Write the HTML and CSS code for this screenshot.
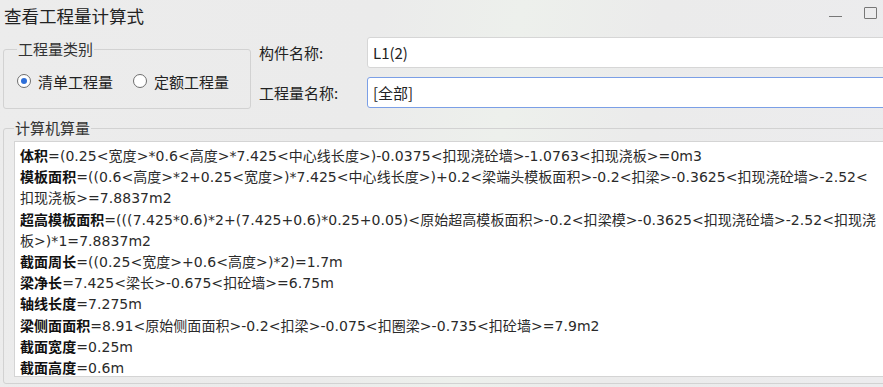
FILE: index.html
```html
<!DOCTYPE html>
<html lang="zh-CN">
<head>
    <meta charset="UTF-8">
    <title>查看工程量计算式</title>
    <link rel="stylesheet" href="styles.css">
</head>
<body>

<div class="window">
    <div class="titlebar">
        <span class="title">查看工程量计算式</span>
        <div class="controls">
            <span class="btn-min"></span>
            <span class="btn-max"></span>
        </div>
    </div>

    <div class="top">
        <fieldset class="group kind">
            <legend>工程量类别</legend>
            <label class="radio"><span class="dot checked"></span>清单工程量</label>
            <label class="radio"><span class="dot"></span>定额工程量</label>
        </fieldset>

        <div class="form">
            <div class="row">
                <span class="label">构件名称:</span>
                <div class="input">L1(2)</div>
            </div>
            <div class="row">
                <span class="label">工程量名称:</span>
                <div class="input focus">[全部]</div>
            </div>
        </div>
    </div>

    <fieldset class="group calc">
        <legend>计算机算量</legend>
        <div class="textbox">
            <p><b>体积</b>=(0.25&lt;宽度&gt;*0.6&lt;高度&gt;*7.425&lt;中心线长度&gt;)-0.0375&lt;扣现浇砼墙&gt;-1.0763&lt;扣现浇板&gt;=0m3</p>
            <p><b>模板面积</b>=((0.6&lt;高度&gt;*2+0.25&lt;宽度&gt;)*7.425&lt;中心线长度&gt;)+0.2&lt;梁端头模板面积&gt;-0.2&lt;扣梁&gt;-0.3625&lt;扣现浇砼墙&gt;-2.52&lt;<br>扣现浇板&gt;=7.8837m2</p>
            <p><b>超高模板面积</b>=(((7.425*0.6)*2+(7.425+0.6)*0.25+0.05)&lt;原始超高模板面积&gt;-0.2&lt;扣梁模&gt;-0.3625&lt;扣现浇砼墙&gt;-2.52&lt;扣现浇<br>板&gt;)*1=7.8837m2</p>
            <p><b>截面周长</b>=((0.25&lt;宽度&gt;+0.6&lt;高度&gt;)*2)=1.7m</p>
            <p><b>梁净长</b>=7.425&lt;梁长&gt;-0.675&lt;扣砼墙&gt;=6.75m</p>
            <p><b>轴线长度</b>=7.275m</p>
            <p><b>梁侧面面积</b>=8.91&lt;原始侧面面积&gt;-0.2&lt;扣梁&gt;-0.075&lt;扣圈梁&gt;-0.735&lt;扣砼墙&gt;=7.9m2</p>
            <p><b>截面宽度</b>=0.25m</p>
            <p><b>截面高度</b>=0.6m</p>
        </div>
    </fieldset>
</div>

</body>
</html>
```

FILE: styles.css
```css
html, body {
    margin: 0;
    padding: 0;
    height: 100%;
    overflow: hidden;
}
body {
    font-family: "Noto Sans CJK SC", "Noto Sans", sans-serif;
    font-size: 15px;
    color: #222;
    background-color: #ebebeb;
}
.window {
    width: 883px;
    height: 387px;
    overflow: hidden;
    background: linear-gradient(100deg, #ececec 0%, #ebebeb 40%, #edf0ec 55%, #ebebeb 70%, #ececee 100%);
}
.titlebar {
    height: 33px;
    display: flex;
    align-items: flex-start;
    justify-content: space-between;
}
.title {
    font-size: 17.5px;
    line-height: 32px;
    margin-left: 4px;
    color: #222;
}
.controls {
    display: flex;
    align-items: flex-start;
    gap: 22px;
    margin-right: 6px;
}
.btn-min {
    width: 13px;
    height: 1px;
    background-color: #777;
    margin-top: 16px;
}
.btn-max {
    width: 11px;
    height: 10px;
    margin-top: 7px;
    border: 1px solid #777;
    border-radius: 1px;
}
.top {
    display: flex;
    align-items: flex-start;
    height: 86px;
}
.group {
    margin: 0;
    padding: 0 10px;
    border: 1px solid #d2d2d2;
    border-radius: 3px;
    min-width: 0;
}
.group legend {
    padding: 0 1px;
    color: #333;
    line-height: 18px;
}
.kind {
    flex-shrink: 0;
    margin-left: 3px;
    margin-top: 7px;
    width: 248px;
    height: 69px;
    box-sizing: border-box;
    display: flex;
    align-items: center;
    padding-left: 13px;
}
.radio {
    display: flex;
    align-items: center;
    gap: 7px;
    padding-bottom: 4px;
    white-space: nowrap;
}
.radio + .radio {
    margin-left: 20px;
}
.dot {
    width: 12px;
    height: 12px;
    border: 1px solid #6e6e6e;
    border-radius: 50%;
    background-color: #fff;
    position: relative;
}
.dot.checked::after {
    content: "";
    position: absolute;
    left: 3px;
    top: 3px;
    width: 6px;
    height: 6px;
    border-radius: 50%;
    background-color: #2f6fd8;
}
.form {
    flex-shrink: 0;
    margin-left: 8px;
    margin-top: 4px;
    display: flex;
    flex-direction: column;
    gap: 9px;
}
.row {
    display: flex;
    align-items: center;
}
.label {
    width: 108px;
    color: #222;
}
.input {
    width: 560px;
    height: 31px;
    box-sizing: border-box;
    border: 1px solid #d6d6d6;
    border-radius: 3px;
    background-color: #fff;
    padding: 0 5px;
    line-height: 29px;
    color: #222;
}
.input.focus {
    border-color: #7b9fe6;
}
.calc {
    margin-left: 3px;
    width: 900px;
    height: 265px;
    box-sizing: border-box;
}
.textbox {
    margin-top: 4px;
    height: 236px;
    box-sizing: border-box;
    border: 1px solid #d4d4d4;
    background-color: #fff;
    padding: 4px 5px;
    overflow: hidden;
    font-family: "DejaVu Sans", "Noto Sans CJK SC", sans-serif;
    font-size: 14px;
    letter-spacing: 0.05px;
}
.textbox p {
    margin: 0;
    white-space: nowrap;
    line-height: 21.2px;
    color: #2a2a2a;
}
.textbox b {
    color: #111;
}
```
